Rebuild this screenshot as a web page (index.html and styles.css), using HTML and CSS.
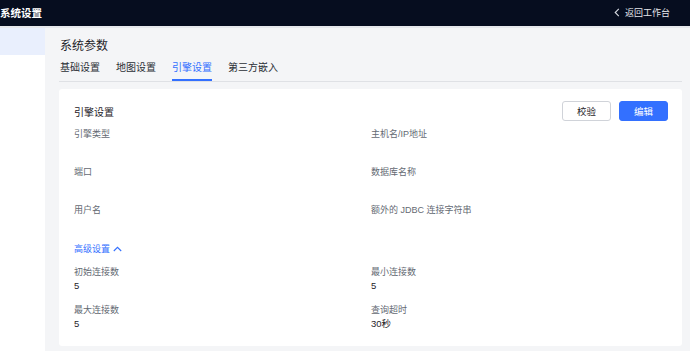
FILE: index.html
```html
<!DOCTYPE html>
<html lang="zh-CN">
<head>
  <meta charset="UTF-8">
  <meta name="viewport" content="width=device-width, initial-scale=1.0">
  <title>系统设置</title>
  <link rel="stylesheet" href="styles.css">
</head>
<body>
  <header class="topbar">
    <span class="topbar-title">系统设置</span>
    <a class="back-link">
      <svg width="6" height="9" viewBox="0 0 6 9"><path d="M4.8 0.8 L1.2 4.5 L4.8 8.2" fill="none" stroke="#d8dbe2" stroke-width="1.1"/></svg>
      返回工作台
    </a>
  </header>

  <div class="layout">
    <aside class="sidebar">
      <div class="side-item active"></div>
    </aside>

    <main class="main">
      <h1 class="page-title">系统参数</h1>
      <nav class="tabs">
        <span class="tab">基础设置</span>
        <span class="tab">地图设置</span>
        <span class="tab active">引擎设置</span>
        <span class="tab">第三方嵌入</span>
      </nav>

      <section class="card">
        <div class="card-head">
          <h2>引擎设置</h2>
          <div class="actions">
            <button class="btn">校验</button>
            <button class="btn primary">编辑</button>
          </div>
        </div>

        <div class="fields">
          <div class="field"><div class="label">引擎类型</div></div>
          <div class="field"><div class="label">主机名/IP地址</div></div>
          <div class="field"><div class="label">端口</div></div>
          <div class="field"><div class="label">数据库名称</div></div>
          <div class="field"><div class="label">用户名</div></div>
          <div class="field"><div class="label">额外的 JDBC 连接字符串</div></div>
        </div>

        <a class="advanced">高级设置
          <svg width="9" height="6" viewBox="0 0 9 6"><path d="M0.8 5 L4.5 1.3 L8.2 5" fill="none" stroke="#3370ff" stroke-width="1.1"/></svg>
        </a>

        <div class="fields small">
          <div class="field"><div class="label">初始连接数</div><div class="value">5</div></div>
          <div class="field"><div class="label">最小连接数</div><div class="value">5</div></div>
          <div class="field"><div class="label">最大连接数</div><div class="value">5</div></div>
          <div class="field"><div class="label">查询超时</div><div class="value">30秒</div></div>
        </div>
      </section>
    </main>
  </div>
</body>
</html>
```

FILE: styles.css
```css
* {
  margin: 0;
  padding: 0;
  box-sizing: border-box;
  font-family: "Liberation Sans", "Noto Sans CJK SC", sans-serif;
}

body {
  background-color: #f4f5f7;
  color: #1f2329;
  width: 690px;
  height: 351px;
  overflow: hidden;
}

.topbar {
  height: 28px;
  background-color: #060d1f;
  border-bottom: 2px solid #e6e8ec;
  display: flex;
  align-items: center;
  justify-content: space-between;
  padding: 0 20px 2px 0;
}

.topbar-title {
  color: #fff;
  font-size: 10.5px;
  font-weight: bold;
}

.back-link {
  color: #e4e6eb;
  font-size: 9px;
  display: flex;
  align-items: center;
  gap: 5px;
}

.layout {
  display: flex;
  height: 323px;
}

.sidebar {
  width: 45px;
  background-color: #fff;
}

.side-item.active {
  height: 27px;
  background-color: #e9effd;
}

.main {
  flex: 1;
  padding: 9px 8px 0 14px;
}

.page-title {
  font-size: 12px;
  font-weight: normal;
  line-height: 18px;
  padding-left: 1px;
}

.tabs {
  display: flex;
  gap: 16px;
  margin-top: 6px;
  border-bottom: 1px solid #dfe1e5;
  padding-left: 1px;
}

.tab {
  font-size: 10px;
  line-height: 14px;
  padding-bottom: 4px;
  border-bottom: 2px solid transparent;
  color: #2b2f36;
}

.tab.active {
  color: #3370ff;
  border-bottom-color: #3370ff;
}

.card {
  background-color: #fff;
  border-radius: 3px;
  margin-top: 7px;
  padding: 12px 14px 15px 15px;
}

.card-head {
  display: flex;
  justify-content: space-between;
  align-items: center;
  height: 20px;
}

.card-head h2 {
  font-size: 10px;
  font-weight: normal;
  color: #1f2329;
}

.actions {
  display: flex;
  gap: 8px;
}

.btn {
  width: 49px;
  height: 20px;
  font-size: 9.5px;
  border: 1px solid #d0d3d9;
  border-radius: 3px;
  background-color: #fff;
  color: #1f2329;
}

.btn.primary {
  background-color: #3370ff;
  border-color: #3370ff;
  color: #fff;
}

.fields {
  display: grid;
  grid-template-columns: 1fr 1fr;
  margin-top: 6px;
}

.field {
  height: 38px;
}

.label {
  font-size: 9px;
  line-height: 14px;
  color: #646a73;
}

.value {
  font-size: 9.5px;
  line-height: 14px;
  color: #1f2329;
}

.advanced {
  display: flex;
  align-items: center;
  gap: 3px;
  font-size: 9px;
  line-height: 14px;
  color: #3370ff;
  margin-top: 1px;
}

.fields.small {
  margin-top: 9px;
  row-gap: 10px;
}

.fields.small .field {
  height: auto;
}
```
